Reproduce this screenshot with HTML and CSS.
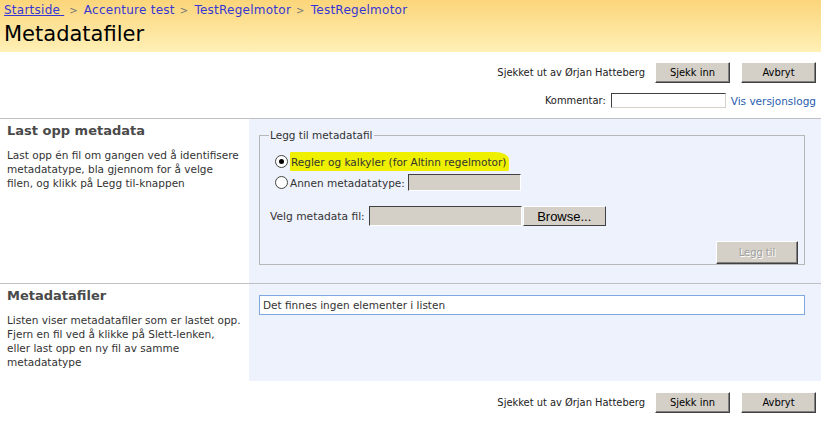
FILE: index.html
```html
<!DOCTYPE html>
<html>
<head>
<meta charset="utf-8">
<link rel="stylesheet" href="styles.css">
</head>
<body>
<div class="header">
  <div class="crumbs"><a href="#" class="home">Startside </a><span class="sep">&gt;</span><a href="#">Accenture test</a><span class="sep">&gt;</span><a href="#">TestRegelmotor</a><span class="sep">&gt;</span><a href="#">TestRegelmotor</a></div>
  <h1 class="title">Metadatafiler</h1>
</div>
<div class="toolbar">
  <div class="trow">
    <span class="tlabel">Sjekket ut av Ørjan Hatteberg</span>
    <button class="btn">Sjekk inn</button>
    <button class="btn">Avbryt</button>
  </div>
  <div class="trow trow2">
    <span class="tlabel">Kommentar:</span>
    <input class="comment" type="text">
    <a href="#" class="vlink">Vis versjonslogg</a>
  </div>
</div>
<div class="section sec1">
  <div class="desc">
    <h2>Last opp metadata</h2>
    <p class="narrow">Last opp én fil om gangen ved å identifisere metadatatype, bla gjennom for å velge filen, og klikk på Legg til-knappen</p>
  </div>
  <div class="panel">
    <fieldset class="fs">
      <legend>Legg til metadatafil</legend>
      <div class="radio-row first"><span class="radio checked"></span><span class="hl">Regler og kalkyler (for Altinn regelmotor)</span></div>
      <div class="radio-row"><span class="radio"></span><span class="rlabel">Annen metadatatype:</span><span class="graybox"></span></div>
      <div class="file-row"><span class="flabel">Velg metadata fil:</span><span class="filebox"></span><button class="browse">Browse...</button></div>
      <div class="add-row"><button class="btn add" disabled>Legg til</button></div>
    </fieldset>
  </div>
</div>
<div class="section sec2">
  <div class="desc">
    <h2>Metadatafiler</h2>
    <p>Listen viser metadatafiler som er lastet opp. Fjern en fil ved å klikke på Slett-lenken,<br>eller last opp en ny fil av samme<br>metadatatype</p>
  </div>
  <div class="panel">
    <div class="list">Det finnes ingen elementer i listen</div>
  </div>
</div>
<div class="toolbar bottom">
  <div class="trow">
    <span class="tlabel">Sjekket ut av Ørjan Hatteberg</span>
    <button class="btn">Sjekk inn</button>
    <button class="btn">Avbryt</button>
  </div>
</div>
</body>
</html>
```
FILE: styles.css
```css
* { box-sizing: border-box; }
html, body { overflow: hidden; }
body {
  margin: 0;
  font-family: "DejaVu Sans", Verdana, sans-serif;
  background: #fff;
  color: #333;
}
.header {
  height: 52px;
  background: linear-gradient(#fbd57a, #fff0b6);
  padding: 3px 0 0 4px;
}
.crumbs {
  font-size: 12px;
  line-height: 14px;
  color: #777;
  letter-spacing: 0.25px;
}
.crumbs a {
  color: #3636d4;
  text-decoration: none;
}
.crumbs a.home { text-decoration: underline; }
.crumbs .sep { margin: 0 6px 0 5px; font-size: 10px; }
.title {
  margin: 3px 0 0 0;
  font-size: 21px;
  font-weight: normal;
  color: #000;
  line-height: 27px;
}
.toolbar {
  display: flex;
  flex-direction: column;
  align-items: flex-end;
  padding: 10px 5px 0 0;
  height: 67px;
  border-bottom: 1px solid #c0c0c4;
  font-family: "DejaVu Sans Condensed", Tahoma, sans-serif;
  font-size: 11px;
}
.toolbar.bottom {
  border-bottom: none;
  padding-top: 11px;
  height: 40px;
}
.trow {
  display: flex;
  align-items: center;
  color: #222;
}
.trow2 { margin-top: 10px; }
.tlabel { margin-right: 10px; }
.trow2 .tlabel { margin-right: 3px; }
.btn {
  font-family: "DejaVu Sans Condensed", Tahoma, sans-serif;
  font-size: 11px;
  color: #000;
  width: 75px;
  height: 21px;
  padding: 0;
  background: #d4d0c8;
  border: 1px solid;
  border-color: #fff #404040 #404040 #fff;
  box-shadow: inset -1px -1px 0 #808080;
  margin-left: 11px;
}
.trow .btn:first-of-type { margin-left: 0; }
.comment {
  width: 115px;
  height: 15px;
  border: 1px solid;
  border-color: #404040 #d4d0c8 #d4d0c8 #404040;
  background: #fff;
  padding: 0;
  margin: 0 0 0 2px;
}
.vlink {
  margin-left: 5px;
  font-family: "DejaVu Sans", Verdana, sans-serif;
  font-size: 10.5px;
  color: #2a5db0;
  text-decoration: none;
}
.section {
  display: grid;
  grid-template-columns: 249px 1fr;
}
.sec1 { height: 165px; border-bottom: 1px solid #c0c0c4; }
.sec2 { height: 97px; }
.desc { padding: 4px 6px 0 7px; }
.desc h2 {
  margin: 0;
  font-size: 13px;
  line-height: 16px;
  color: #4a4a4a;
}
.desc p {
  margin: 9px 0 0 0;
  font-size: 10.5px;
  line-height: 14px;
  color: #333;
}
.desc p.narrow { max-width: 232px; }
.panel {
  background: #eef2fd;
  padding: 10px 16px 0 10px;
}
.sec2 .panel { padding-top: 11px; }
.fs {
  margin: 0;
  height: 136px;
  border: 1px solid #b7b7b7;
  padding: 0 6px 0 10px;
  font-size: 10.5px;
  color: #333;
}
.fs legend {
  padding: 0 1px;
  margin-left: -1px;
  font-size: 10.5px;
}
.radio-row {
  display: flex;
  align-items: center;
  height: 21px;
  margin-left: 5px;
}
.radio-row.first { margin-top: 10px; }
.radio {
  width: 13px;
  height: 13px;
  border-radius: 50%;
  border: 1px solid #444;
  background: #fff;
  margin-right: 2px;
  position: relative;
  flex: none;
}
.radio.checked::after {
  content: "";
  position: absolute;
  left: 3px;
  top: 3px;
  width: 5px;
  height: 5px;
  border-radius: 50%;
  background: #000;
}
.hl {
  background: #eef000;
  padding: 4px 3px 3px 1px;
  border-radius: 1px 14px 2px 1px / 1px 8px 2px 1px;
  color: #333;
}
.rlabel { margin-right: 3px; }
.graybox {
  width: 113px;
  height: 17px;
  background: #d4d0c8;
  border: 1px solid;
  border-color: #404040 #fff #fff #404040;
}
.file-row {
  display: flex;
  align-items: center;
  margin-top: 13px;
}
.flabel { font-size: 10.7px; color: #333; margin-right: 4px; }
.filebox {
  width: 153px;
  height: 20px;
  background: #d4d0c8;
  border: 1px solid;
  border-color: #404040 #fff #fff #404040;
}
.browse {
  margin-left: 1px;
  width: 83px;
  height: 20px;
  padding: 0;
  background: #d4d0c8;
  border: 1px solid;
  border-color: #fff #404040 #404040 #fff;
  font-family: "Liberation Sans", Arial, sans-serif;
  font-size: 13px;
  color: #000;
}
.add-row {
  display: flex;
  justify-content: flex-end;
  margin-top: 15px;
}
.btn.add {
  width: 82px;
  height: 23px;
  color: #a0a0a0;
  text-shadow: 1px 1px 0 #fff;
  margin-right: 0;
}
.list {
  height: 20px;
  background: #fff;
  border: 1px solid #7ea6e0;
  font-size: 10.5px;
  line-height: 18px;
  padding-left: 3px;
  color: #333;
}
```
